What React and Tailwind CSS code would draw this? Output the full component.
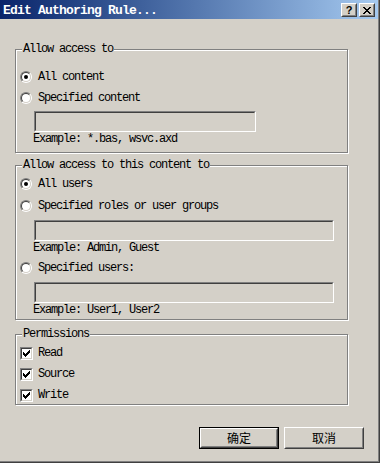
import React from "react";

const mono = "font-['Liberation_Mono','Noto_Sans_CJK_SC',monospace] text-[12px] tracking-[-1.2px] text-black";

function Radio({ checked }) {
  return (
    <span className="block w-[12px] h-[12px] shrink-0 rounded-full border border-t-[#808080] border-l-[#808080] border-b-white border-r-white">
      <span className="flex w-full h-full items-center justify-center rounded-full border border-t-[#404040] border-l-[#404040] border-b-[#d4d0c8] border-r-[#d4d0c8] bg-white">
        {checked && <span className="block w-[4px] h-[4px] rounded-full bg-black" />}
      </span>
    </span>
  );
}

function Checkbox() {
  // classic 7px check mark
  const cols = [
    [0, 2], [1, 3], [2, 4], [3, 3], [4, 2], [5, 1], [6, 0],
  ];
  return (
    <span className="block w-[13px] h-[13px] shrink-0 border border-t-[#808080] border-l-[#808080] border-b-white border-r-white">
      <span className="block w-full h-full border border-t-[#404040] border-l-[#404040] border-b-[#d4d0c8] border-r-[#d4d0c8] bg-white">
        <svg width="9" height="9" viewBox="0 0 9 9" shapeRendering="crispEdges" className="block">
          {cols.map(([x, y]) => (
            <rect key={x} x={x + 1} y={y + 1} width="1" height="3" fill="#000" />
          ))}
        </svg>
      </span>
    </span>
  );
}

function Field({ className }) {
  return (
    <div className={"h-[21px] ml-[18px] border border-t-[#808080] border-l-[#808080] border-b-white border-r-white " + className}>
      <div className="h-full w-full border border-t-[#404040] border-l-[#404040] border-b-[#d4d0c8] border-r-[#d4d0c8] bg-[#d4d0c8]" />
    </div>
  );
}

function Option({ label, checked, className }) {
  return (
    <div className={"flex items-center gap-[6px] h-[16px] ml-[4px] " + className}>
      <Radio checked={checked} />
      <span className="leading-[16px] whitespace-pre">{label}</span>
    </div>
  );
}

function Check({ label, className }) {
  return (
    <div className={"flex items-center gap-[5px] h-[16px] ml-[4px] " + className}>
      <Checkbox />
      <span className="leading-[16px] whitespace-pre">{label}</span>
    </div>
  );
}

function Hint({ children }) {
  return <div className="h-[14px] ml-[17px] leading-[14px] whitespace-pre">{children}</div>;
}

function Group({ title, className, children }) {
  return (
    <div className={"relative ml-[15px] w-[333px] border border-[#808080] shadow-[inset_1px_1px_0_#fff,1px_1px_0_#fff] " + className}>
      <span className="absolute left-[6px] -top-[8px] bg-[#d4d0c8] px-[1px] leading-[14px] whitespace-pre">{title}</span>
      {children}
    </div>
  );
}

function CaptionButton({ children }) {
  return (
    <div className="w-[16px] h-[14px] border border-t-white border-l-white border-b-[#404040] border-r-[#404040]">
      <div className="flex h-full w-full items-center justify-center border border-t-[#d4d0c8] border-l-[#d4d0c8] border-b-[#808080] border-r-[#808080] bg-[#d4d0c8]">
        {children}
      </div>
    </div>
  );
}

function DlgButton({ label, primary }) {
  const inner = (
    <div className="h-full w-full border border-t-white border-l-white border-b-[#404040] border-r-[#404040]">
      <div className="flex h-full w-full items-center justify-center border border-t-[#d4d0c8] border-l-[#d4d0c8] border-b-[#808080] border-r-[#808080] font-['Noto_Sans_CJK_SC',sans-serif] text-[12px] tracking-normal">
        {label}
      </div>
    </div>
  );
  return (
    <div className={"w-[80px] h-[22px] " + (primary ? "border border-black" : "")}>
      {inner}
    </div>
  );
}

export default function App() {
  return (
    <div className="w-[382px] h-[464px] bg-white">
      <div className={"w-[380px] h-[463px] bg-[#d4d0c8] border-r border-b border-[#404040] shadow-[inset_-1px_-1px_0_#808080] " + mono}>
        <div className="flex h-[19px] w-[378px] bg-gradient-to-r from-[#0a246a] to-[#a6caf0]">
          <div className="flex-1 pl-[3px] pt-[3px] leading-[16px] text-[13px] font-bold text-white tracking-[-0.8px] whitespace-pre">
            Edit Authoring Rule...
          </div>
          <div className="flex gap-[2px] pt-[3px] pr-[3px]">
            <CaptionButton>
              <span className="font-['Liberation_Sans',sans-serif] font-bold text-[11px] leading-[10px] tracking-normal">?</span>
            </CaptionButton>
            <CaptionButton>
              <svg width="8" height="7" viewBox="0 0 8 7" shapeRendering="crispEdges">
                <path d="M0 0h2v1h-2zM6 0h2v1h-2zM1 1h2v1h-2zM5 1h2v1h-2zM2 2h4v1h-4zM3 3h2v1h-2zM2 4h4v1h-4zM1 5h2v1h-2zM5 5h2v1h-2zM0 6h2v1h-2zM6 6h2v1h-2z" fill="#000" />
              </svg>
            </CaptionButton>
          </div>
        </div>

        <Group title="Allow access to" className="mt-[30px] h-[104px]">
          <Option label="All content" checked className="mt-[19px]" />
          <Option label="Specified content" className="mt-[5px]" />
          <Field className="mt-[5px] w-[222px]" />
          <Hint>Example: *.bas, wsvc.axd</Hint>
        </Group>

        <Group title="Allow access to this content to" className="mt-[12px] h-[155px]">
          <Option label="All users" checked className="mt-[10px]" />
          <Option label="Specified roles or user groups" className="mt-[6px]" />
          <Field className="mt-[6px] w-[300px]" />
          <Hint>Example: Admin, Guest</Hint>
          <Option label="Specified users:" className="mt-[5px]" />
          <Field className="mt-[6px] w-[300px]" />
          <Hint>Example: User1, User2</Hint>
        </Group>

        <Group title="Permissions" className="mt-[14px] h-[71px]">
          <Check label="Read" className="mt-[10px]" />
          <Check label="Source" className="mt-[5px]" />
          <Check label="Write" className="mt-[5px]" />
        </Group>

        <div className="flex gap-[5px] ml-[199px] mt-[22px]">
          <DlgButton label="确定" primary />
          <DlgButton label="取消" />
        </div>
      </div>
    </div>
  );
}
